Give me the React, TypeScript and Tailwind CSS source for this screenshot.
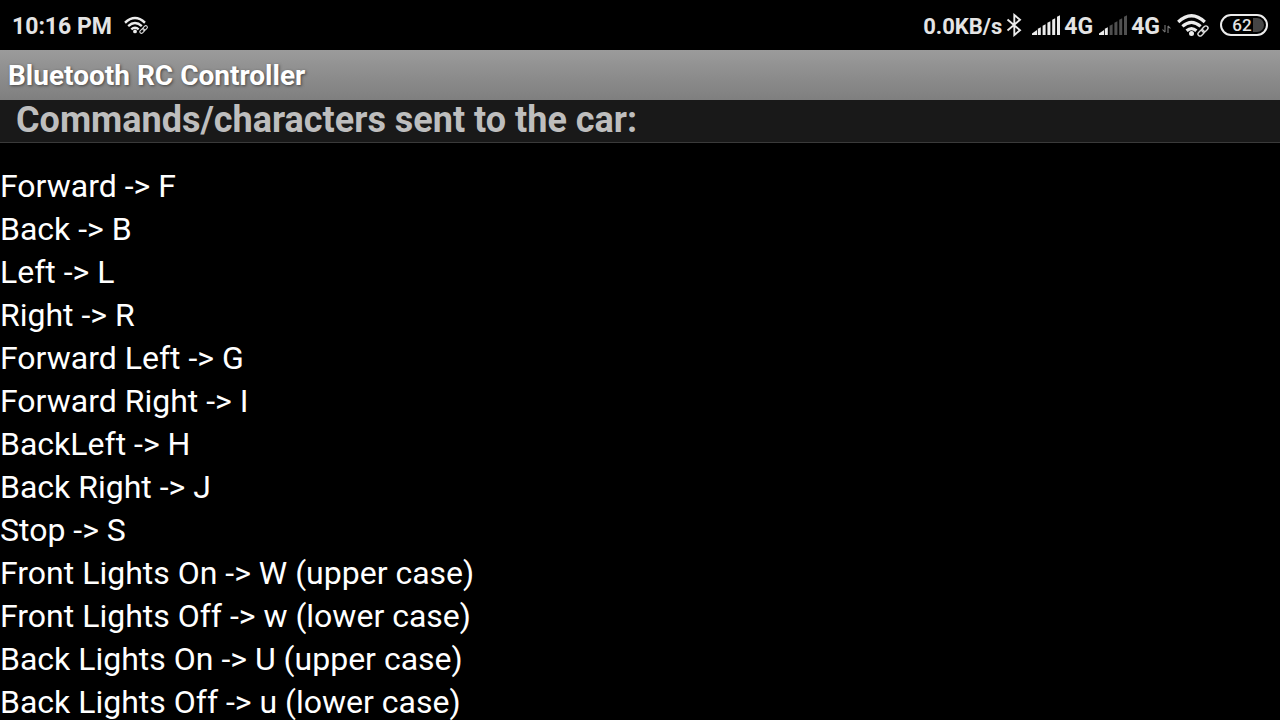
const commands = [
  'Forward -> F',
  'Back -> B',
  'Left -> L',
  'Right -> R',
  'Forward Left -> G',
  'Forward Right -> I',
  'BackLeft -> H',
  'Back Right -> J',
  'Stop -> S',
  'Front Lights On -> W (upper case)',
  'Front Lights Off -> w (lower case)',
  'Back Lights On -> U (upper case)',
  'Back Lights Off -> u (lower case)',
];

function Wifi({ className }: { className: string }) {
  return (
    <svg viewBox="0 0 33 24" className={className} fill="none" aria-label="Wi-Fi">
      <g stroke="#ececec" strokeWidth="3.2">
        <path d="M1.2 9Q14.5-3.4 27.8 9" />
        <path d="M5.4 13.4Q14.5 5.2 23.6 13.4" />
        <path d="M9.6 17.8Q14.5 13.4 19.4 17.8" />
      </g>
      <circle cx="14.5" cy="20.6" r="2.5" fill="#ececec" />
      <g transform="rotate(-45 26 18)">
        <g stroke="#000" strokeWidth="3.4">
          <rect x="19.8" y="15.9" width="7" height="4.2" rx="2.1" />
          <rect x="25.2" y="15.9" width="7" height="4.2" rx="2.1" />
        </g>
        <g stroke="#dcdcdc" strokeWidth="1.4">
          <rect x="19.8" y="15.9" width="7" height="4.2" rx="2.1" />
          <rect x="25.2" y="15.9" width="7" height="4.2" rx="2.1" />
        </g>
      </g>
    </svg>
  );
}

function Signal({ bars }: { bars: number }) {
  const heights = [4, 7, 10, 13, 16, 19];
  return (
    <svg viewBox="0 0 28 20" className="h-5 w-7" aria-label="Signal strength">
      {heights.map((h, i) =>
        i === 0 ? (
          <path key={h} d="M0 20V18.5L5 15V20Z" fill="#ececec" />
        ) : (
          <path
            key={h}
            d={`M${i * 4.8 + 1} 20V${20.8 - h}L${i * 4.8 + 4} ${19.2 - h}V20Z`}
            fill={i < bars ? '#ececec' : '#505050'}
          />
        ),
      )}
    </svg>
  );
}

function StatusBar() {
  return (
    <header className="flex h-[50px] shrink-0 items-center justify-between bg-black px-3 text-[23px] leading-7 font-bold text-[#e4e4e4]">
      <div className="flex items-center gap-3">
        <span className="pt-1">10:16 PM</span>
        <Wifi className="h-[18px] w-[25px]" />
      </div>
      <div className="flex items-center whitespace-nowrap">
        <span className="pt-1 text-[22px]">0.0KB/s</span>
        <svg viewBox="0 0 16 24" className="ml-1 h-6 w-4" fill="none" stroke="#ececec" strokeWidth="1.9" aria-label="Bluetooth">
          <path d="M1.5 6.5L14 17.2L8.3 22V2L14 6.8L1.5 17.5" />
        </svg>
        <div className="ml-2.5 flex items-center gap-1">
          <Signal bars={6} />
          <span className="pt-1">4G</span>
        </div>
        <div className="ml-1.5 flex items-center gap-1">
          <Signal bars={2} />
          <span className="pt-1">4G</span>
        </div>
        <svg viewBox="0 0 9 8" className="mt-2 ml-0.5 h-2 w-[9px]" fill="none" stroke="#777" strokeWidth="1.1" aria-label="Mobile data">
          <path d="M3 0V7M0.5 4.5L3 7.2M6 8V1M8.5 3.5L6 0.8" />
        </svg>
        <Wifi className="ml-1.5 h-6 w-[33px]" />
        <div className="ml-2.5 flex h-[22px] w-12 items-center rounded-full border-2 border-[#ececec] bg-[linear-gradient(90deg,#000_70%,#454545_70%)] bg-clip-content p-0.5 text-[17px] font-medium">
          <span className="w-full pr-1 text-center">62</span>
        </div>
      </div>
    </header>
  );
}

export default function App() {
  return (
    <div className="flex h-screen flex-col overflow-hidden bg-black font-['Roboto',sans-serif]">
      <StatusBar />
      <div className="flex h-[50px] shrink-0 items-center bg-linear-to-b from-[#9b9b9b] to-[#7f7f7f] px-2 pt-0.5">
        <h1 className="text-[28px] leading-8 font-bold text-white [text-shadow:1px_1px_3px_#444]">Bluetooth RC Controller</h1>
      </div>
      <main className="min-h-0 flex-1 overflow-hidden">
        <h2 className="h-[43px] border-b border-[#3a3a3a] bg-[#191919] px-4 text-4xl leading-10 font-bold text-[#bebebe]">
          Commands/characters sent to the car:
        </h2>
        <ul className="pt-[22px] text-[32px] leading-[43px] text-white">
          {commands.map((command) => (
            <li key={command}>{command}</li>
          ))}
        </ul>
      </main>
    </div>
  );
}
